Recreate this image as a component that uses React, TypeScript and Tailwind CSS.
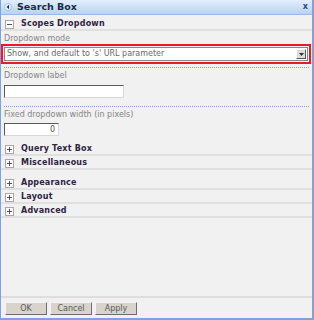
import React from "react";

function Toggle({ open }: { open?: boolean }) {
  return (
    <span className="flex h-[9px] w-[9px] items-center justify-center border border-[#a8a8a8] bg-white">
      <svg width="7" height="7" viewBox="0 0 7 7">
        <rect x="1" y="3" width="5" height="1" fill="#555" />
        {!open && <rect x="3" y="1" width="1" height="5" fill="#555" />}
      </svg>
    </span>
  );
}

function Section({ title, open, gap }: { title: string; open?: boolean; gap?: boolean }) {
  return (
    <div className={`flex h-[14px] items-center gap-[7px] border-b-2 border-[#e0e0e0] pl-[4px] pt-[2px] ${gap ? "mb-[6px]" : ""}`}>
      <Toggle open={open} />
      <span className="text-[8px] font-bold leading-[10px] tracking-[0.2px] text-[#2f2442]">{title}</span>
    </div>
  );
}

function Dotted() {
  return <div className="mx-[3px] h-0 border-t border-dotted border-[#7f9fdd]" />;
}

function Label({ text }: { text: string }) {
  return <div className="pl-[3px] text-[8px] leading-[10px] text-[#858585]">{text}</div>;
}

function Btn({ label }: { label: string }) {
  return (
    <button className="h-[13px] w-[42px] border border-t-[#f4f4f4] border-l-[#f4f4f4] border-r-[#6e6e6e] border-b-[#6e6e6e] bg-[#d8d4cc] text-[8px] leading-none text-[#5a5a5a]">
      {label}
    </button>
  );
}

export default function App() {
  return (
    <div
      className="flex h-[320px] w-[314px] flex-col border-b-2 border-l border-r-2 border-[#7ea3dc] bg-[#f1f1f1]"
      style={{ fontFamily: '"DejaVu Sans", Verdana, sans-serif' }}
    >
      {/* title bar */}
      <div className="flex h-[15px] items-center border-b border-[#9ab9e6] bg-gradient-to-b from-[#e2eefc] to-[#b9d2f2] pl-[3px] pr-[4px]">
        <svg width="8" height="8" viewBox="0 0 8 8">
          <circle cx="4" cy="4" r="3.5" fill="#e8f1fc" stroke="#8aa9d6" strokeWidth="0.6" />
          <path d="M5 1.8 L2.6 4 L5 6.2 Z" fill="#1c2d52" />
        </svg>
        <span className="ml-[5px] text-[9.5px] font-bold leading-none text-[#1b2a4a]">Search Box</span>
        <span className="ml-auto text-[8px] font-bold leading-none text-[#2c4a86]">x</span>
      </div>

      <div className="mt-[2px]">
        <Section title="Scopes Dropdown" open />
        <div className="mt-[3px]">
          <Label text="Dropdown mode" />
        </div>
        <div className="mr-[1px] border-2 border-[#e41e26] p-[1px]">
          <div className="flex h-[14px] items-center border border-[#8a8a8a] bg-white pl-[2px] pr-[1px]">
            <span className="text-[8px] text-[#6a6a6a]">Show, and default to 's' URL parameter</span>
            <span className="ml-auto flex h-[10px] w-[10px] items-center justify-center border border-t-[#fafafa] border-l-[#fafafa] border-r-[#5a5a5a] border-b-[#5a5a5a] bg-[#dcdcdc]">
              <svg width="5" height="3" viewBox="0 0 5 3">
                <path d="M0 0 H5 L2.5 3 Z" fill="#333" />
              </svg>
            </span>
          </div>
        </div>
        <div className="mt-[3px]">
          <Dotted />
        </div>
        <div className="mt-[3px]">
          <Label text="Dropdown label" />
        </div>
        <div className="mt-[4px] ml-[3px] h-[13px] w-[120px] border border-t-[#5a5a5a] border-l-[#5a5a5a] border-r-[#d8d8d8] border-b-[#d8d8d8] bg-white" />
        <div className="mt-[8px]">
          <Dotted />
        </div>
        <div className="mt-[3px]">
          <Label text="Fixed dropdown width (in pixels)" />
        </div>
        <div className="mt-[3px] ml-[3px] flex h-[13px] w-[55px] items-center justify-end border border-t-[#5a5a5a] border-l-[#5a5a5a] border-r-[#d8d8d8] border-b-[#d8d8d8] bg-white pr-[3px] text-[8px] text-[#555]">
          0
        </div>
        <div className="mt-[6px]">
          <Section title="Query Text Box" />
          <Section title="Miscellaneous" gap />
          <Section title="Appearance" />
          <Section title="Layout" />
          <Section title="Advanced" />
        </div>
      </div>

      <div className="flex-1" />

      <div className="border-t-2 border-[#dedede] pb-[3px] pt-[4px]">
        <div className="flex gap-[3px] pl-[4px]">
          <Btn label="OK" />
          <Btn label="Cancel" />
          <Btn label="Apply" />
        </div>
      </div>
    </div>
  );
}
